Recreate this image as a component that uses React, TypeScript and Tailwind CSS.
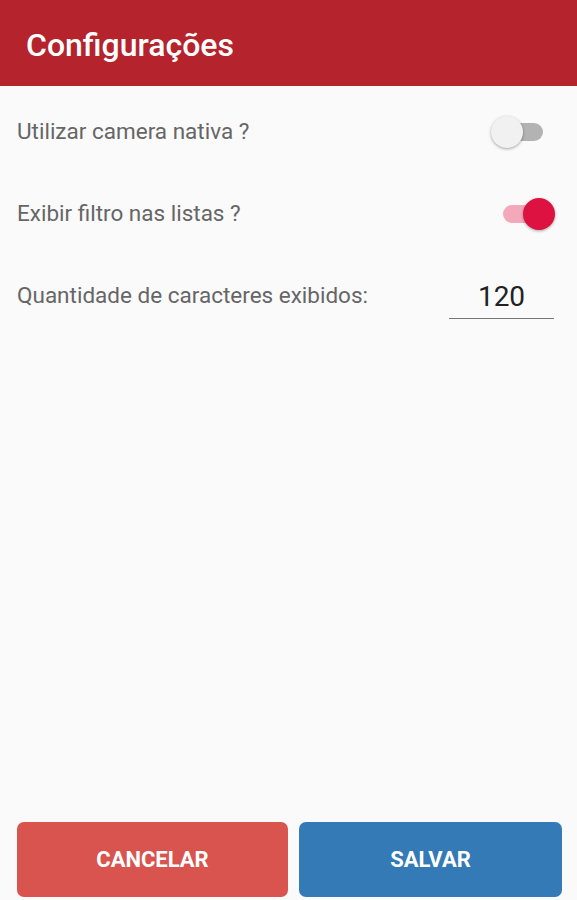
import { useState } from "react";

interface SwitchProps {
  on: boolean;
  onToggle: () => void;
}

const Toggle = ({ on, onToggle }: SwitchProps) => {
  return (
    <button
      onClick={onToggle}
      className={`relative w-[46px] h-[18px] rounded-full ${on ? "bg-[#f4a9bb]" : "bg-[#b3b3b3]"}`}
    >
      <span
        className={`absolute top-[-7px] w-[32px] h-[32px] rounded-full shadow-[0_1px_3px_rgba(0,0,0,0.35)] ${
          on ? "right-[-6px] bg-[#dd1241]" : "left-[-6px] bg-[#f1f1f1]"
        }`}
      />
    </button>
  );
};

const App = () => {
  const [nativeCamera, setNativeCamera] = useState(false);
  const [showFilter, setShowFilter] = useState(true);
  const [chars, setChars] = useState("120");

  return (
    <div className="flex flex-col min-h-screen bg-[#fafafa] font-['Roboto',sans-serif]">
      <header className="flex items-center bg-[#b5232c] h-[86px] px-[26px] pt-[3px]">
        <h1 className="text-white text-[32px] font-medium">Configurações</h1>
      </header>

      <div className="flex flex-col pt-[5px]">
        <div className="flex justify-between items-center h-[82px] pl-[17px] pr-[34px]">
          <span className="text-[22.5px] text-[#666666]">Utilizar camera nativa ?</span>
          <Toggle on={nativeCamera} onToggle={() => setNativeCamera(!nativeCamera)} />
        </div>
        <div className="flex justify-between items-center h-[82px] pl-[17px] pr-[28px]">
          <span className="text-[22.5px] text-[#666666]">Exibir filtro nas listas ?</span>
          <Toggle on={showFilter} onToggle={() => setShowFilter(!showFilter)} />
        </div>
        <div className="flex justify-between items-center h-[82px] pl-[17px] pr-[23px]">
          <span className="text-[22.5px] text-[#666666]">Quantidade de caracteres exibidos:</span>
          <input
            value={chars}
            onChange={(e) => setChars(e.target.value)}
            className="w-[105px] h-[42px] mt-[3px] text-center text-[28px] text-[#222222] bg-transparent border-b border-[#777777] outline-none"
          />
        </div>
      </div>

      <div className="flex gap-[11px] mt-auto pl-[17px] pr-[15px] pb-[3px]">
        <button className="w-[271px] h-[75px] rounded-[7px] bg-[#d9534f] text-white text-[22px] font-bold">
          CANCELAR
        </button>
        <button className="flex-1 h-[75px] rounded-[7px] bg-[#337ab7] text-white text-[22px] font-bold">
          SALVAR
        </button>
      </div>
    </div>
  );
};

export default App;
